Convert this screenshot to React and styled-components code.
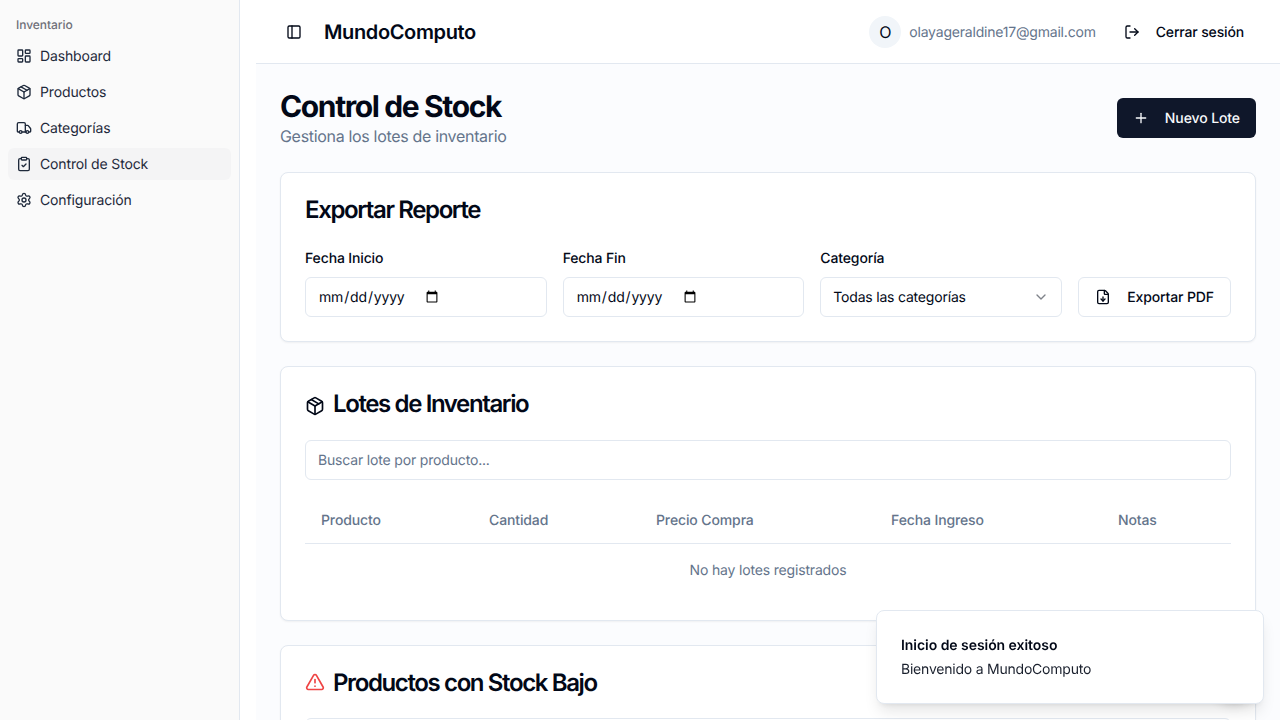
import React from "react";
import styled, { createGlobalStyle } from "styled-components";
import {
	LayoutDashboard,
	Package,
	Truck,
	ClipboardCheck,
	Settings,
	PanelLeft,
	LogOut,
	Plus,
	FileDown,
	ChevronDown,
	TriangleAlert,
} from "lucide-react";

const GlobalStyle = createGlobalStyle`
	* {
		box-sizing: border-box;
	}
	html, body {
		margin: 0;
		height: 100%;
		overflow: hidden;
		background: #fff;
		color: #020817;
		font-family: Inter, "Liberation Sans", sans-serif;
		text-rendering: geometricPrecision;
	}
	button, input {
		text-rendering: geometricPrecision;
	}
`;

const Shell = styled.div`
	display: flex;
	height: 720px;
	overflow: hidden;
`;

const Sidebar = styled.aside`
	flex: 0 0 240px;
	background: #fafafa;
	border-right: 1px solid #e2e8f0;
	padding: 8px;
`;

const SidebarLabel = styled.div`
	height: 32px;
	padding: 0 8px;
	display: flex;
	align-items: center;
	font-size: 12px;
	font-weight: 500;
	letter-spacing: -0.05px;
	color: #6f6f78;
`;

const Menu = styled.nav`
	display: flex;
	flex-direction: column;
	gap: 4px;
`;

const MenuItem = styled.a`
	display: flex;
	align-items: center;
	gap: 8px;
	height: 32px;
	padding: 0 8px;
	border-radius: 6px;
	font-size: 14px;
	letter-spacing: -0.14px;
	color: #1e293b;
	background: ${(p) => (p.$active ? "#f4f4f5" : "transparent")};
`;

const Main = styled.div`
	flex: 1;
	min-width: 0;
	margin-left: 16px;
	display: flex;
	flex-direction: column;
`;

const Header = styled.header`
	flex: 0 0 64px;
	display: flex;
	align-items: center;
	justify-content: space-between;
	padding: 0 20px 0 24px;
	background: #fff;
	border-bottom: 1px solid #e2e8f0;
`;

const HeaderLeft = styled.div`
	display: flex;
	align-items: center;
	gap: 16px;
`;

const TriggerButton = styled.button`
	width: 28px;
	height: 28px;
	border: 0;
	padding: 0;
	background: transparent;
	color: #020817;
	display: flex;
	align-items: center;
	justify-content: center;
`;

const Brand = styled.div`
	font-size: 20px;
	font-weight: 600;
	color: #020817;
	letter-spacing: -0.37px;
`;

const HeaderRight = styled.div`
	display: flex;
	align-items: center;
	gap: 12px;
`;

const UserBox = styled.div`
	display: flex;
	align-items: center;
	gap: 8px;
`;

const Avatar = styled.div`
	width: 32px;
	height: 32px;
	border-radius: 50%;
	background: #f1f5f9;
	display: flex;
	align-items: center;
	justify-content: center;
	font-size: 16px;
	color: #020817;
`;

const Email = styled.span`
	padding-top: 2px;
	font-size: 14px;
	letter-spacing: -0.2px;
	color: #64748b;
`;

const LogoutButton = styled.button`
	height: 40px;
	padding: 0 16px;
	border: 0;
	background: transparent;
	display: flex;
	align-items: center;
	gap: 16px;
	font: 500 14px Inter, "Liberation Sans", sans-serif;
	letter-spacing: -0.15px;
	color: #020817;
`;

const LogoutLabel = styled.span`
	padding-top: 2px;
`;

const Content = styled.main`
	flex: 1;
	min-height: 0;
	overflow: hidden;
	background: #fbfcfe;
	padding: 24px;
	display: flex;
	flex-direction: column;
	gap: 24px;
`;

const PageHead = styled.div`
	display: flex;
	align-items: center;
	justify-content: space-between;
`;

const PageTitle = styled.h1`
	margin: 0 0 -2px;
	font-size: 30px;
	line-height: 38px;
	font-weight: 700;
	letter-spacing: -1.38px;
	color: #020817;
`;

const PageSub = styled.p`
	margin: 0;
	font-size: 16px;
	line-height: 24px;
	letter-spacing: -0.32px;
	color: #64748b;
`;

const PrimaryButton = styled.button`
	height: 40px;
	padding: 0 16px;
	border: 0;
	border-radius: 6px;
	background: #0f172a;
	color: #f8fafc;
	display: flex;
	align-items: center;
	gap: 16px;
	white-space: nowrap;
	font: 500 14px Inter, "Liberation Sans", sans-serif;
	letter-spacing: -0.1px;
`;

const Card = styled.section`
	flex: 0 0 auto;
	background: #fff;
	border: 1px solid #e2e8f0;
	border-radius: 8px;
	box-shadow: 0 1px 2px rgba(0, 0, 0, 0.05);
	padding: 24px;
`;

const CardTitle = styled.h2`
	margin: 0 0 23px;
	display: flex;
	align-items: center;
	gap: 8px;
	font-size: 24px;
	line-height: 26px;
	font-weight: 600;
	letter-spacing: -1.38px;
	color: #020817;
`;

const BoxIcon = styled(Package)`
	margin-top: 4px;
`;

const AlertIcon = styled(TriangleAlert)`
	margin-bottom: 2px;
	color: #ef4444;
`;

const FilterRow = styled.div`
	display: flex;
	align-items: flex-end;
	gap: 16px;
	padding-top: 3px;
`;

const Field = styled.div`
	flex: 1;
	min-width: 0;
	display: flex;
	flex-direction: column;
	gap: 8px;
`;

const Label = styled.label`
	font-size: 14px;
	line-height: 20px;
	font-weight: 500;
	letter-spacing: -0.14px;
	color: #020817;
`;

const TextInput = styled.input`
	display: flex;
	width: 100%;
	height: 40px;
	padding: 8px 12px;
	border: 1px solid #e2e8f0;
	border-radius: 6px;
	background: #fff;
	color: #020817;
	font: 400 14px Inter, "Liberation Sans", sans-serif;
	letter-spacing: -0.17px;
	outline: none;

	&::placeholder {
		color: #64748b;
		opacity: 1;
	}
	&::-webkit-datetime-edit {
		flex: 0 0 auto;
	}
	&::-webkit-date-and-time-value {
		text-align: left;
	}
	&::-webkit-datetime-edit-fields-wrapper {
		padding: 0;
	}
	&::-webkit-calendar-picker-indicator {
		margin-left: 1px;
		padding: 0;
	}
`;

const SelectBox = styled.div`
	height: 40px;
	padding: 0 12px;
	border: 1px solid #e2e8f0;
	border-radius: 6px;
	background: #fff;
	display: flex;
	align-items: center;
	justify-content: space-between;
	font-size: 14px;
	letter-spacing: -0.2px;
	color: #020817;

	svg {
		opacity: 0.5;
	}
`;

const OutlineButton = styled.button`
	flex: 0 0 153px;
	height: 40px;
	padding: 0 16px;
	border: 1px solid #e2e8f0;
	border-radius: 6px;
	background: #fff;
	color: #020817;
	display: flex;
	align-items: center;
	justify-content: center;
	gap: 16px;
	white-space: nowrap;
	font: 500 14px Inter, "Liberation Sans", sans-serif;
	letter-spacing: -0.14px;
`;

const Table = styled.table`
	width: 100%;
	margin-top: 16px;
	border-collapse: collapse;
	table-layout: fixed;
	font-size: 14px;
`;

const Th = styled.th`
	width: ${(p) => p.$w || "auto"};
	height: 47px;
	padding: 3px 16px 0;
	text-align: left;
	font-weight: 500;
	letter-spacing: -0.12px;
	color: #64748b;
	border-bottom: 1px solid #e2e8f0;
`;

const EmptyCell = styled.td`
	height: 53px;
	padding-top: 3px;
	text-align: center;
	letter-spacing: -0.17px;
	color: #64748b;
`;

const TableBox = styled.div`
	height: 120px;
	margin-top: -1px;
	border: 1px solid #e2e8f0;
	border-radius: 6px;
`;

const FloatingDot = styled.div`
	position: fixed;
	right: 26px;
	bottom: 22px;
	width: 40px;
	height: 40px;
	border-radius: 50%;
	background: #fff;
	box-shadow: 0 6px 12px rgba(0, 0, 0, 0.18);
`;

const Toast = styled.div`
	position: fixed;
	right: 16px;
	bottom: 16px;
	width: 388px;
	height: 94px;
	padding: 25px 24px 0;
	background: #fff;
	border: 1px solid #e2e8f0;
	border-radius: 8px;
	box-shadow: 0 10px 15px -3px rgba(0, 0, 0, 0.1), 0 4px 6px -4px rgba(0, 0, 0, 0.1);
	color: #020817;
`;

const ToastTitle = styled.div`
	font-size: 14px;
	line-height: 20px;
	font-weight: 600;
	letter-spacing: -0.05px;
`;

const ToastText = styled.div`
	margin-top: 4px;
	font-size: 14px;
	line-height: 20px;
	letter-spacing: -0.22px;
	opacity: 0.9;
`;

const navItems = [
	{ label: "Dashboard", icon: LayoutDashboard },
	{ label: "Productos", icon: Package },
	{ label: "Categorías", icon: Truck },
	{ label: "Control de Stock", icon: ClipboardCheck, active: true },
	{ label: "Configuración", icon: Settings },
];

const columns = [
	{ label: "Producto", w: "168px" },
	{ label: "Cantidad", w: "167px" },
	{ label: "Precio Compra", w: "235px" },
	{ label: "Fecha Ingreso", w: "227px" },
	{ label: "Notas" },
];

export default function App() {
	return (
		<>
			<GlobalStyle />
			<Shell>
				<Sidebar>
					<SidebarLabel>Inventario</SidebarLabel>
					<Menu>
						{navItems.map((item) => (
							<MenuItem key={item.label} $active={item.active}>
								<item.icon size={16} />
								{item.label}
							</MenuItem>
						))}
					</Menu>
				</Sidebar>
				<Main>
					<Header>
						<HeaderLeft>
							<TriggerButton>
								<PanelLeft size={16} />
							</TriggerButton>
							<Brand>MundoComputo</Brand>
						</HeaderLeft>
						<HeaderRight>
							<UserBox>
								<Avatar>O</Avatar>
								<Email>olayageraldine17@gmail.com</Email>
							</UserBox>
							<LogoutButton>
								<LogOut size={16} />
								<LogoutLabel>Cerrar sesión</LogoutLabel>
							</LogoutButton>
						</HeaderRight>
					</Header>
					<Content>
						<PageHead>
							<div>
								<PageTitle>Control de Stock</PageTitle>
								<PageSub>Gestiona los lotes de inventario</PageSub>
							</div>
							<PrimaryButton>
								<Plus size={16} />
								Nuevo Lote
							</PrimaryButton>
						</PageHead>

						<Card>
							<CardTitle>Exportar Reporte</CardTitle>
							<FilterRow>
								<Field>
									<Label>Fecha Inicio</Label>
									<TextInput type="date" />
								</Field>
								<Field>
									<Label>Fecha Fin</Label>
									<TextInput type="date" />
								</Field>
								<Field>
									<Label>Categoría</Label>
									<SelectBox>
										Todas las categorías
										<ChevronDown size={16} />
									</SelectBox>
								</Field>
								<OutlineButton>
									<FileDown size={16} />
									Exportar PDF
								</OutlineButton>
							</FilterRow>
						</Card>

						<Card>
							<CardTitle>
								<BoxIcon size={20} />
								Lotes de Inventario
							</CardTitle>
							<TextInput placeholder="Buscar lote por producto..." />
							<Table>
								<thead>
									<tr>
										{columns.map((col) => (
											<Th key={col.label} $w={col.w}>
												{col.label}
											</Th>
										))}
									</tr>
								</thead>
								<tbody>
									<tr>
										<EmptyCell colSpan={5}>No hay lotes registrados</EmptyCell>
									</tr>
								</tbody>
							</Table>
						</Card>

						<Card>
							<CardTitle>
								<AlertIcon size={20} />
								Productos con Stock Bajo
							</CardTitle>
							<TableBox />
						</Card>
					</Content>
				</Main>
			</Shell>
			<FloatingDot />
			<Toast>
				<ToastTitle>Inicio de sesión exitoso</ToastTitle>
				<ToastText>Bienvenido a MundoComputo</ToastText>
			</Toast>
		</>
	);
}
